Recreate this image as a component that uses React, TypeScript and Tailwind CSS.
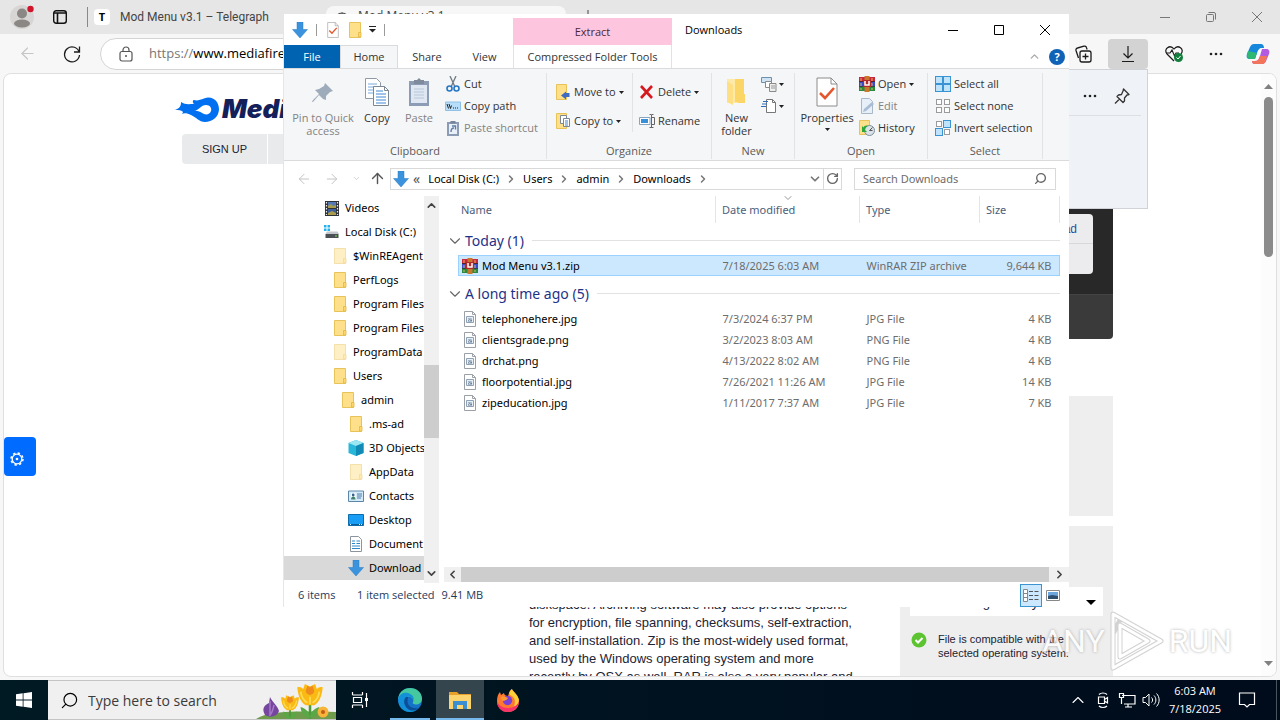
import React from 'react';
import { ChevronDown, ChevronRight, ChevronUp, ArrowLeft, ArrowRight, ArrowUp, Search, RotateCw } from 'lucide-react';

type IconProps = { className?: string };

/* ---------- shared icons ---------- */

const BlueArrow: React.FC<IconProps> = ({ className = 'w-4 h-4' }) => (
  <svg viewBox="0 0 16 16" className={className}>
    <path d="M5 0h6v7.500h4.500L8 16 .5 7.500H5z" fill="#3a93dc" stroke="#2b7cc4" strokeWidth=".5" />
  </svg>
);

const Folder: React.FC<IconProps> = ({ className = 'w-4 h-4' }) => (
  <svg viewBox="0 0 16 16" className={className}>
    <path d="M2.500.500h11v15h-11z" fill="#ffe08a" stroke="#e8c35a" />
    <path d="M11.500 10.500h2.500v4.500h-2.500z" fill="#ffd766" stroke="#e0b64a" strokeWidth=".8" />
  </svg>
);

const WinRar = () => (
  <svg viewBox="0 0 16 16" className="w-4 h-4 shrink-0">
    <path d="M0 1h16v5H0z" fill="#c8283c" />
    <path d="M0 6h16v4.500H0z" fill="#3a4ac8" />
    <path d="M0 10.500h16V15H0z" fill="#2b8a3e" />
    <path d="M0 5.500h16M0 10.500h16" stroke="#222" strokeWidth=".7" />
    <path d="M5.500 0h5v16h-5z" fill="#c9772d" />
    <path d="M4 4h8v7H4z" fill="#b02c2c" />
    <path d="M6 5v4h4V5" fill="none" stroke="#fff" strokeWidth="1.500" />
    <path d="M2 2v3M13 2v3M2 7v3M13 7v3M2 12v2M13 12v2" stroke="#f3d36b" strokeWidth=".8" />
  </svg>
);

const ImageFile = () => (
  <svg viewBox="0 0 16 16" className="w-4 h-4 shrink-0">
    <path d="M2.500.500h8l3 3v12h-11z" fill="#fff" stroke="#9aa0a6" />
    <path d="M10.500.500v3h3" fill="none" stroke="#9aa0a6" />
    <path d="M4.500 5.500h7v6h-7z" fill="#e6eef6" stroke="#8ea1b5" />
    <path d="M6 7.500h4v3H6z" fill="#6b8199" />
    <path d="M6 8.500l2 1 2-2" stroke="#fff" strokeWidth=".8" fill="none" />
  </svg>
);

const VideoIcon = () => (
  <svg viewBox="0 0 16 16" className="w-4 h-4">
    <path d="M1 1h14v15H1z" fill="#2f3338" />
    <path d="M4 2h8v6H4z" fill="#5679b5" />
    <path d="M4 9h8v6H4z" fill="#3f5f9c" />
    <path d="M4 6l3-2 2 2 3-1v3H4zM4 13l4-2 4 2v2H4z" fill="#a99d4d" />
    <path d="M2.500 2v13M13.500 2v13" stroke="#eee" strokeWidth="1.200" strokeDasharray="1.500 1.500" />
  </svg>
);

const DiskIcon = () => (
  <svg viewBox="0 0 16 16" className="w-4 h-4">
    <path d="M0 1h2.500v2.500H0zM3.500 1H6v2.500H3.500zM0 4.500h2.500V7H0zM3.500 4.500H6V7H3.500z" fill="#21b3ee" />
    <path d="M3 7.500h10.500L15 10H1.500z" fill="#c3c7cb" />
    <path d="M1.500 10h13v4h-13z" fill="#4b5055" />
    <path d="M11 12h2" stroke="#7ee04a" />
  </svg>
);

const CubeIcon = () => (
  <svg viewBox="0 0 16 16" className="w-4 h-4">
    <path d="M8 0l7.500 3v10L8 16 .5 13V3z" fill="#28b7d8" />
    <path d="M8 0l7.500 3L8 6 .5 3z" fill="#9be8f4" />
    <path d="M8 6l7.500-3v10L8 16z" fill="#118bb5" />
  </svg>
);

const ContactIcon = () => (
  <svg viewBox="0 0 16 16" className="w-4 h-4">
    <path d="M.5 3h15v10.500H.5z" fill="#d6ebfa" stroke="#5c86a8" />
    <path d="M3 5h4.500v6.500H3z" fill="#fff" />
    <circle cx="5.200" cy="7" r="1.400" fill="#37618a" />
    <path d="M3 11.500c0-4 4.500-4 4.500 0z" fill="#3f7f6b" />
    <path d="M9 6h5M9 8h5M9 10h4" stroke="#4b7ba6" />
  </svg>
);

const DesktopIcon = () => (
  <svg viewBox="0 0 16 16" className="w-4 h-4">
    <path d="M.5 2.500h15v11H.5z" fill="#1a9df5" stroke="#0f6cab" />
    <path d="M1 12.500h14" stroke="#0b5c96" />
    <path d="M2 12.500h2M11 12.500h3" stroke="#d7eefe" strokeDasharray="1 1" />
  </svg>
);

const DocIcon = () => (
  <svg viewBox="0 0 16 16" className="w-4 h-4">
    <path d="M2.500.500h8l3 3v12h-11z" fill="#fff" stroke="#8d959c" />
    <path d="M4 5h3M4 7.500h3M8.500 5H12M8.500 7.500H12M4 10h8M4 12.500h8" stroke="#2e86c9" />
  </svg>
);

const CheckDoc: React.FC<IconProps> = ({ className }) => (
  <svg viewBox="0 0 22 30" className={className}>
    <path d="M1 1h14l6 6v22H1z" fill="#fff" stroke="#8c8c8c" />
    <path d="M15 1v6h6" fill="none" stroke="#8c8c8c" />
    <path d="M4 16l5 5 9-10" fill="none" stroke="#e4572e" strokeWidth="2.600" />
  </svg>
);

const Caret = () => (
  <svg viewBox="0 0 5 3" className="w-[5px] h-[3px] shrink-0">
    <path d="M0 0h5L2.500 3z" fill="#222" />
  </svg>
);

const Dots = () => (
  <svg viewBox="0 0 14 4" className="w-3.5 h-1">
    <circle cx="2" cy="2" r="1.300" fill="#222" />
    <circle cx="7" cy="2" r="1.300" fill="#222" />
    <circle cx="12" cy="2" r="1.300" fill="#222" />
  </svg>
);

/* ---------- ribbon ---------- */

const RibbonGroup: React.FC<{ label: string; className: string; children: React.ReactNode }> = ({ label, className, children }) => (
  <div className={`flex flex-col shrink-0 border-r border-[#e2e3e4] mt-1 mb-px ${className}`}>
    <div className="flex flex-1 items-start">{children}</div>
    <div className="text-center text-[#5a5a5a] leading-4">{label}</div>
  </div>
);

const BigButton: React.FC<{ icon: React.ReactNode; className?: string; children: React.ReactNode }> = ({ icon, className = '', children }) => (
  <button className={`flex flex-col items-center leading-[13px] pt-[3px] ${className}`}>
    <span className="h-8 mb-[3px] flex items-center justify-center">{icon}</span>
    {children}
  </button>
);

const SmallButton: React.FC<{ icon: React.ReactNode; label: string; caret?: boolean; disabled?: boolean }> = ({ icon, label, caret, disabled }) => (
  <button disabled={disabled} className={`flex items-center gap-[3px] h-[22px] whitespace-nowrap ${disabled ? 'text-[#838383]' : ''}`}>
    <span className="w-4 h-4 shrink-0">{icon}</span>
    {label}
    {caret && <Caret />}
  </button>
);

const SelectIcon: React.FC<{ on: number[] }> = ({ on }) => (
  <svg viewBox="0 0 16 16" className="w-4 h-4">
    {[0, 1, 2, 3].map((i) => {
      const active = on.includes(i);
      return (
        <rect key={i} x={(i % 2) * 8 + (active ? 0.5 : 1.5)} y={Math.floor(i / 2) * 8 + (active ? 0.5 : 1.5)} width={active ? 7 : 5} height={active ? 7 : 5}
          fill={active ? '#bfe3fb' : '#fff'} stroke={active ? '#3c93d2' : '#9b9b9b'} />
      );
    })}
  </svg>
);

const Ribbon = () => (
  <div className="flex h-[93px] shrink-0 bg-[#f5f6f7] border-y border-[#dadbdc] text-[#333] overflow-hidden">
    <RibbonGroup label="Clipboard" className="w-[263px]">
      <BigButton className="w-[78px] text-[#838383]" icon={
        <svg viewBox="0 0 24 24" className="w-6 h-6"><path d="M14 3l8 8-3 1-4 4 0 4-3-1-4-4-6 7-1 0 1-2 6-6-4-4 4-1 5-3z" fill="#9eabba" /></svg>
      }>
        <span>Pin to Quick</span>
        <span>access</span>
      </BigButton>
      <BigButton className="w-[30px]" icon={
        <svg viewBox="0 0 26 30" className="w-[26px] h-[30px]">
          <path d="M1.500 1.500h11l4 4v16h-15z" fill="#fff" stroke="#8e9aa8" />
          <path d="M4 7h9M4 10h9M4 13h9M4 16h9" stroke="#79a9dc" />
          <path d="M9.500 9.500h11l4 4v15h-15z" fill="#fff" stroke="#7c8794" />
          <path d="M20.500 9.500v4h4" fill="none" stroke="#7c8794" />
          <path d="M12 14h7M12 17h10M12 20h10M12 23h10M12 26h10" stroke="#3f86d2" />
        </svg>
      }>Copy</BigButton>
      <BigButton className="w-[54px] text-[#838383]" icon={
        <svg viewBox="0 0 22 30" className="w-[22px] h-[30px]">
          <path d="M1 4h20v25H1z" fill="#8c9cb4" />
          <path d="M3 8h16v18H3z" fill="#dfe7f2" />
          <path d="M6 3h3l2-2 2 2h3v4H6z" fill="#7f8b9d" />
          <path d="M6 12h10M6 15h10M6 18h10M6 21h10" stroke="#b9c7da" />
        </svg>
      }>Paste</BigButton>
      <div className="flex flex-col -ml-px">
        <SmallButton label="Cut" icon={
          <svg viewBox="0 0 16 16"><path d="M5 0l5 11M11 0L6 11" stroke="#6d7882" strokeWidth="1.300" /><circle cx="4.500" cy="12.500" r="2.500" fill="none" stroke="#2577c4" strokeWidth="1.600" /><circle cx="11.500" cy="12.500" r="2.500" fill="none" stroke="#2577c4" strokeWidth="1.600" /></svg>
        } />
        <SmallButton label="Copy path" icon={
          <svg viewBox="0 0 16 16"><path d="M.5 4h15v8.500H.5z" fill="#b8ddf8" stroke="#8fc0e6" /><path d="M2 6l1.500 4.500M4 6l1.500 4.500 1-3" stroke="#222" fill="none" /><path d="M8 10h6" stroke="#222" strokeDasharray="1 1" /></svg>
        } />
        <SmallButton disabled label="Paste shortcut" icon={
          <svg viewBox="0 0 16 16"><path d="M2 2h12v14H2z" fill="#8c9cb4" /><path d="M4 4h8v10H4z" fill="#eaf0f8" /><path d="M5.500 1h5v2.500h-5z" fill="#76859b" /><path d="M6 12c0-3 1-4 3-4M7 6h3.500v3.500" stroke="#5c7da8" strokeWidth="1.400" fill="none" /></svg>
        } />
      </div>
    </RibbonGroup>

    <RibbonGroup label="Organize" className="w-[165px]">
      <div className="flex flex-col gap-[7px] pl-2 pt-2 w-[86px] border-r border-[#e2e3e4]">
        <SmallButton caret label="Move to" icon={
          <svg viewBox="0 0 16 16"><path d="M1.500.500h10v15h-10z" fill="#ffe08a" stroke="#e8c35a" /><path d="M14.500 9v4H11v2.500L6 11.500l5-4V9z" fill="#3d6cc0" /></svg>
        } />
        <SmallButton caret label="Copy to" icon={
          <svg viewBox="0 0 16 16"><path d="M1.500.500h10v15h-10z" fill="#ffe08a" stroke="#e8c35a" /><path d="M5.500 2.500h6v8h-6z" fill="#fff" stroke="#7c8794" /><path d="M8.500 5.500h6v8h-6z" fill="#fff" stroke="#7c8794" /><path d="M10 8h3M10 10h3M10 12h3" stroke="#3f86d2" /></svg>
        } />
      </div>
      <div className="flex flex-col gap-[7px] pl-[6px] pt-2">
        <SmallButton caret label="Delete" icon={
          <svg viewBox="0 0 16 16"><path d="M2 2l11 12M13 2L2 14" stroke="#d6191f" strokeWidth="2.600" /></svg>
        } />
        <SmallButton label="Rename" icon={
          <svg viewBox="0 0 16 16"><path d="M.5 4.500H11v7H.5z" fill="#fff" stroke="#8aa4bd" /><path d="M2 6h7v4H2z" fill="#3a8fd9" /><path d="M10.500 1.500h2l2 0M12.500 2v12M10.500 14.500h4M12.500 4.500h3v7h-3" stroke="#666" fill="none" /></svg>
        } />
      </div>
    </RibbonGroup>

    <RibbonGroup label="New" className="w-[83px]">
      <BigButton className="w-[49px]" icon={
        <svg viewBox="0 0 22 28" className="w-[22px] h-7"><path d="M1 1h14v24H1z" fill="#ffe9a6" /><path d="M9 1h9v23H9z" fill="#fbd667" /><path d="M12 16h7v9h-7z" fill="#fbd667" /><path d="M1 3l6 4v20l-6-3z" fill="#ffdf84" /></svg>
      }>
        <span>New</span>
        <span>folder</span>
      </BigButton>
      <div className="flex flex-col">
        <button aria-label="New item" className="flex items-center gap-0.5 h-[22px]">
          <svg viewBox="0 0 16 16" className="w-4 h-4"><path d="M.5 1.500h10v5H.5z" fill="#cfe3f3" stroke="#6b90ad" /><path d="M4.500 5.500h6v6h-6z" fill="#fff" stroke="#8a8a8a" /><path d="M8.500 7.500h6.500v8H8.500z" fill="#eee" stroke="#8a8a8a" /><path d="M10 10h4M10 12h4" stroke="#999" /></svg>
          <Caret />
        </button>
        <button aria-label="Easy access" className="flex items-center gap-0.5 h-[22px]">
          <svg viewBox="0 0 16 16" className="w-4 h-4"><path d="M5.500 1.500h6l3 3v10h-9z" fill="#fff" stroke="#777" /><path d="M11.500 1.500v3h3" fill="none" stroke="#777" /><path d="M2 3.500h5M1 6h5M0 8.500h5" stroke="#2d6fbf" strokeWidth="1.200" /></svg>
          <Caret />
        </button>
      </div>
    </RibbonGroup>

    <RibbonGroup label="Open" className="w-[133px]">
      <BigButton className="w-[64px]" icon={<CheckDoc className="w-[22px] h-[30px]" />}>
        <span>Properties</span>
        <span className="pt-1"><Caret /></span>
      </BigButton>
      <div className="flex flex-col">
        <SmallButton caret label="Open" icon={<WinRar />} />
        <SmallButton disabled label="Edit" icon={
          <svg viewBox="0 0 16 16"><path d="M2.500.500h8l3 3v12h-11z" fill="#e7eff8" stroke="#a9b7c6" /><path d="M4 14l1-3 8-7 2 2-8 7z" fill="#a9bdd4" /></svg>
        } />
        <SmallButton label="History" icon={
          <svg viewBox="0 0 16 16"><path d="M.5.500h10v14H.5z" fill="#ffe08a" stroke="#e8c35a" /><circle cx="10.500" cy="10.500" r="5" fill="#d9e2e8" stroke="#7e8f9a" /><path d="M10.500 10.500l3-3M10.500 10.500h3" stroke="#555" /><path d="M3 6v6h5l-2-2c0-2 1-3 3-4-2-1-4 0-4.500 1.500z" fill="#30a53a" /></svg>
        } />
      </div>
    </RibbonGroup>

    <RibbonGroup label="Select" className="w-[115px]">
      <div className="flex flex-col pl-[7px]">
        <SmallButton label="Select all" icon={<SelectIcon on={[0, 1, 2, 3]} />} />
        <SmallButton label="Select none" icon={<SelectIcon on={[]} />} />
        <SmallButton label="Invert selection" icon={<SelectIcon on={[1, 2]} />} />
      </div>
    </RibbonGroup>
  </div>
);

/* ---------- explorer ---------- */

const tree = [
  { label: 'Videos', pad: 'pl-10', icon: <VideoIcon /> },
  { label: 'Local Disk (C:)', pad: 'pl-10', icon: <DiskIcon /> },
  { label: '$WinREAgent', pad: 'pl-12', icon: <Folder className="w-4 h-4 opacity-50" /> },
  { label: 'PerfLogs', pad: 'pl-12', icon: <Folder /> },
  { label: 'Program Files', pad: 'pl-12', icon: <Folder /> },
  { label: 'Program Files', pad: 'pl-12', icon: <Folder /> },
  { label: 'ProgramData', pad: 'pl-12', icon: <Folder className="w-4 h-4 opacity-50" /> },
  { label: 'Users', pad: 'pl-12', icon: <Folder /> },
  { label: 'admin', pad: 'pl-14', icon: <Folder /> },
  { label: '.ms-ad', pad: 'pl-16', icon: <Folder /> },
  { label: '3D Objects', pad: 'pl-16', icon: <CubeIcon /> },
  { label: 'AppData', pad: 'pl-16', icon: <Folder className="w-4 h-4 opacity-50" /> },
  { label: 'Contacts', pad: 'pl-16', icon: <ContactIcon /> },
  { label: 'Desktop', pad: 'pl-16', icon: <DesktopIcon /> },
  { label: 'Document', pad: 'pl-16', icon: <DocIcon /> },
  { label: 'Download', pad: 'pl-16', icon: <BlueArrow />, active: true },
];

const groups = [
  {
    title: 'Today (1)',
    files: [{ name: 'Mod Menu v3.1.zip', date: '7/18/2025 6:03 AM', type: 'WinRAR ZIP archive', size: '9,644 KB', selected: true }],
  },
  {
    title: 'A long time ago (5)',
    files: [
      { name: 'telephonehere.jpg', date: '7/3/2024 6:37 PM', type: 'JPG File', size: '4 KB' },
      { name: 'clientsgrade.png', date: '3/2/2023 8:03 AM', type: 'PNG File', size: '4 KB' },
      { name: 'drchat.png', date: '4/13/2022 8:02 AM', type: 'PNG File', size: '4 KB' },
      { name: 'floorpotential.jpg', date: '7/26/2021 11:26 AM', type: 'JPG File', size: '14 KB' },
      { name: 'zipeducation.jpg', date: '1/11/2017 7:37 AM', type: 'JPG File', size: '7 KB' },
    ],
  },
];

const FileTable = () => (
  <table className="w-full table-fixed border-collapse">
    <colgroup>
      <col />
      <col className="w-36" />
      <col className="w-[120px]" />
      <col className="w-20" />
    </colgroup>
    <thead>
      <tr className="h-[27px] text-[#4c607a] text-left">
        <th className="font-normal pl-[3px]">Name</th>
        <th className="font-normal pl-1.5 border-l border-[#e5e5e5] relative">
          Date modified
          <ChevronDown size={12} strokeWidth={1.5} className="absolute -top-1 left-1/2 -translate-x-1/2 text-[#777]" />
        </th>
        <th className="font-normal pl-1.5 border-l border-[#e5e5e5]">Type</th>
        <th className="font-normal pl-1.5 border-x border-[#e5e5e5]">Size</th>
      </tr>
    </thead>
    {groups.map((group) => (
      <tbody key={group.title}>
        <tr className="h-8">
          <th colSpan={4} className="font-normal text-left">
            <div className="flex items-center -ml-3 pt-[3px] text-[14px] leading-5 text-[#1e3287]">
              <ChevronDown size={18} strokeWidth={1.5} className="text-[#666] mr-px" />
              {group.title}
              <span className="flex-1 h-px bg-[#e2e2e2] ml-2" />
            </div>
          </th>
        </tr>
        {group.files.map((file) => (
          <tr key={file.name} className={`h-[21px] text-[#6d6d6d] ${file.selected ? 'bg-[#cce8ff] outline outline-1 -outline-offset-1 outline-[#99d1ff]' : ''}`}>
            <td className="text-black">
              <div className="flex items-center gap-1 pl-1">
                {file.selected ? <WinRar /> : <ImageFile />}
                {file.name}
              </div>
            </td>
            <td className="pl-[7px]">{file.date}</td>
            <td className="pl-[7px]">{file.type}</td>
            <td className="pr-2 text-right">{file.size}</td>
          </tr>
        ))}
      </tbody>
    ))}
  </table>
);

const Explorer = () => (
  <section className="absolute left-[284px] right-[211px] top-3.5 bottom-[73px] bg-white flex flex-col text-[11px] leading-4 text-black shadow-[-1px_0_0_#e4e6e8] z-20">
    {/* title bar */}
    <div className="flex h-[31px] shrink-0 items-center">
      <div className="flex items-center w-[229px] pl-2">
        <BlueArrow />
        <span className="w-px h-3 bg-[#9a9a9a] ml-2" />
        <CheckDoc className="w-3 h-4 ml-2.5" />
        <span className="ml-2"><Folder /></span>
        <svg viewBox="0 0 7 7" className="w-[7px] h-[7px] ml-1.5"><path d="M0 .5h7" stroke="#222" /><path d="M0 3h7L3.500 6.500z" fill="#222" /></svg>
        <span className="w-px h-3 bg-[#9a9a9a] ml-2" />
      </div>
      <div className="w-[159px] self-end h-[27px] bg-[#fdc5de] text-[#4b2838] flex items-center justify-center">Extract</div>
      <h1 className="pl-[13px] flex-1">Downloads</h1>
      <div className="flex pr-px">
        <button aria-label="Minimize" className="w-[46px] flex justify-center items-center"><svg viewBox="0 0 10 10" className="w-2.5 h-2.5"><path d="M0 5.500h10" stroke="#000" /></svg></button>
        <button aria-label="Maximize" className="w-[46px] flex justify-center items-center"><svg viewBox="0 0 10 10" className="w-2.5 h-2.5"><path d="M.5.500h9v9h-9z" fill="none" stroke="#000" /></svg></button>
        <button aria-label="Close" className="w-[46px] flex justify-center items-center"><svg viewBox="0 0 10 10" className="w-2.5 h-2.5"><path d="M0 0l10 10M10 0L0 10" stroke="#000" /></svg></button>
      </div>
    </div>

    {/* ribbon tabs */}
    <div className="flex h-[23px] shrink-0 text-[#333]">
      <button className="w-14 bg-[#0063b1] text-white">File</button>
      <button className="w-[58px] bg-[#f5f6f7] border-x border-t border-[#dadbdc]">Home</button>
      <button className="w-[58px]">Share</button>
      <button className="w-[57px]">View</button>
      <button className="w-[159px] border-x border-[#e6dfe3]">Compressed Folder Tools</button>
      <div className="flex flex-1 items-center justify-end gap-2 pr-1">
        <ChevronUp size={13} strokeWidth={2.5} className="text-[#aaa]" />
        <button aria-label="Help" className="w-4 h-4 rounded-full bg-[#0f62b5] text-white font-bold leading-4">?</button>
      </div>
    </div>

    <Ribbon />

    {/* address row */}
    <div className="flex h-[35px] shrink-0 items-center pr-[13px] font-['Noto_Sans',sans-serif]">
      <div className="flex items-center w-[106px] pl-3 text-[#c4c4c4]">
        <ArrowLeft size={16} strokeWidth={1.5} />
        <ArrowRight size={16} strokeWidth={1.5} className="ml-3" />
        <ChevronDown size={9} className="ml-3" />
        <ArrowUp size={17} className="ml-2 text-[#555]" />
      </div>
      <div className="flex flex-1 items-center h-[22px] border border-[#d9d9d9]">
        <span className="pl-0.5"><BlueArrow className="w-4 h-4" /></span>
        <span className="pl-1 pr-2 text-[14px] text-[#555]">«</span>
        {['Local Disk (C:)', 'Users', 'admin', 'Downloads'].map((part) => (
          <span key={part} className="flex items-center">
            {part}
            <ChevronRight size={12} strokeWidth={3} className="mx-1.5 text-[#777]" />
          </span>
        ))}
        <ChevronDown size={14} strokeWidth={3} className="ml-auto mr-px text-[#777]" />
        <button aria-label="Refresh" className="w-[18px] h-full border-l border-[#d9d9d9] flex items-center justify-center"><RotateCw size={13} strokeWidth={2.5} className="text-[#666]" /></button>
      </div>
      <label className="flex items-center w-[202px] h-[22px] ml-3 border border-[#d9d9d9] px-2">
        <input aria-label="Search Downloads" placeholder="Search Downloads" className="flex-1 min-w-0 outline-none placeholder:text-[#6d6d6d]" />
        <Search size={13} strokeWidth={2.5} className="-scale-x-100 text-[#666]" />
      </label>
    </div>

    <div className="flex flex-1 min-h-0 font-['Noto_Sans',sans-serif]">
      <nav className="w-[140px] shrink-0 overflow-hidden">
        {tree.map((item, i) => (
          <a key={i} href="#" className={`flex items-center gap-[5px] h-6 whitespace-nowrap ${item.pad} ${item.active ? 'bg-[#d9d9d9]' : ''}`}>
            <span className="shrink-0">{item.icon}</span>
            {item.label}
          </a>
        ))}
      </nav>
      <div className="w-[15px] shrink-0 bg-[#f0f0f0] flex flex-col items-center py-[3px] text-[#444]">
        <ChevronUp size={13} strokeWidth={3} />
        <div className="flex-1 w-full pt-[153px]"><div className="h-[73px] bg-[#cdcdcd]" /></div>
        <ChevronDown size={13} strokeWidth={3} />
      </div>
      <div className="flex flex-1 flex-col min-w-0 pl-[5px]">
        <div className="flex-1 pl-3.5 pr-[9px]"><FileTable /></div>
        <div className="h-[15px] shrink-0 bg-[#f0f0f0] flex items-center text-[#444] mb-px">
          <ChevronRight size={13} strokeWidth={3} className="rotate-180 mx-0.5" />
          <div className="flex-1 h-full bg-[#cdcdcd]" />
          <ChevronRight size={13} strokeWidth={3} className="ml-1 mr-[3px]" />
        </div>
      </div>
    </div>

    {/* status bar */}
    <footer className="flex h-6 shrink-0 items-center pl-3.5 pr-[5px] text-[#1e395b]">
      <span className="w-[59px]">6 items</span>
      <span>1 item selected</span>
      <span className="pl-[7px]">9.41 MB</span>
      <div className="ml-auto flex items-center">
        <button aria-label="Details view" className="w-[22px] h-[23px] bg-[#cce8ff] border border-[#3c93d2] flex items-center justify-center">
          <svg viewBox="0 0 16 13" className="w-4 h-[13px]"><path d="M.5.500h4v12h-4zM.5 4.500h4M.5 8.500h4" fill="#fff" stroke="#888" /><path d="M6 2.500h4M6 6.500h4M6 10.500h4M11.500 2.500h4M11.500 6.500h4M11.500 10.500h4" stroke="#555" /></svg>
        </button>
        <button aria-label="Thumbnail view" className="w-[22px] flex justify-center">
          <svg viewBox="0 0 14 11" className="w-3.5 h-[11px]"><path d="M.5.500h13v10H.5z" fill="#fff" stroke="#888" /><path d="M2 2h10v4H2z" fill="#6ba6df" /><path d="M2 6l4-1 6 1v3H2z" fill="#2e4f6e" /></svg>
        </button>
      </div>
    </footer>
  </section>
);

/* ---------- browser ---------- */

const DownloadsPopup = () => (
  <aside className="absolute right-[132px] top-[69px] w-[360px] h-[140px] bg-[#eff2f6] border border-[#cfd2d6] z-10">
    <div className="flex items-center justify-end gap-4 h-[46px] mr-1.5 pr-2.5 pt-1.5 border-b border-[#dddfe3]">
      <Dots />
      <svg viewBox="0 0 18 18" className="w-[18px] h-[18px]"><path d="M10.500 2l5.500 5.500-2 .5-2.500 3 0 3-1.500 1.500L4 9.500 5.500 8l3-.5L10 4zM6.500 12L2 16.500" fill="none" stroke="#333" strokeWidth="1.300" strokeLinejoin="round" /></svg>
    </div>
  </aside>
);

const MediaFirePage = () => (
  <main className="flex flex-1 mx-[3px] mb-[3px] bg-white rounded-lg border border-[#dfdfdf] overflow-hidden relative font-['Liberation_Sans',sans-serif] text-[#1c2333]">
    <div className="flex flex-1 min-w-0 justify-center pl-[30px]">
      <div className="flex flex-col w-[931px]">
        <header className="h-[90px] shrink-0">
          <a href="#" className="flex items-center h-[60px] pt-2.5 -ml-2">
            <svg viewBox="0 0 46 28" className="w-[46px] h-7">
              <path d="M1 15c5-2 6-4 6-8 4 3 8 2 13 2-2-2-1-4 0-4 3 1 6 0 10-1.500C38 0 45 6 45 14S38 27 31 27c-6 0-9-5-14-7-4-2-7-2-9-1 2-2 1-4-7-4z" fill="#0070f0" />
              <path d="M20 16c5-1 7-6 12-6 4 0 6 3 5 6s-4 4-7 3-5-4-10-3z" fill="#fff" />
            </svg>
            <span className="pl-0.5 text-[26px] leading-7 font-['Inter'] font-black italic text-[#13205a]">MediaFire</span>
          </a>
          <div className="flex gap-px text-[11px]">
            <button className="w-[85px] h-[30px] bg-[#e8eaec] rounded-l-sm">SIGN UP</button>
            <button className="w-[85px] h-[30px] bg-[#e8eaec]">LOG IN</button>
          </div>
        </header>
        <div className="flex flex-1 min-h-0 justify-end gap-10">
          <p className="w-[331px] pt-[432px] text-[13px] leading-[18px] whitespace-nowrap">
            diskspace. Archiving software may also provide options<br />
            for encryption, file spanning, checksums, self-extraction,<br />
            and self-installation. Zip is the most-widely used format,<br />
            used by the Windows operating system and more<br />
            recently by OSX as well. RAR is also a very popular and
          </p>
          <div className="w-[213px] flex flex-col">
            <div className="h-[130px] shrink-0 bg-[#282828] px-5 pt-[50px]">
              <div className="h-[60px] bg-[#ececee] rounded">
                <button className="block w-full h-[30px] pr-4 border-b border-[#d8d8dc] text-right text-[12px] text-[#1f4fa3]">Download</button>
              </div>
            </div>
            <div className="h-[45px] shrink-0 bg-[#3a3a3a] border-t border-[#444] rounded-b" />
            <div className="h-[120px] shrink-0 mt-[57px] bg-[#eee]" />
            <div className="flex-1 mt-2.5 bg-[#eee] px-2.5 pt-[61px]">
              <label className="flex relative bg-white">
                <select aria-label="Operating system" className="appearance-none w-full h-[29px] px-2.5 pt-0.5 text-[13px]">
                  <option>View settings history</option>
                </select>
                <svg viewBox="0 0 10 5" className="absolute right-[7px] top-[13px] w-2.5 h-[5px]"><path d="M0 0h10L5 5z" fill="#000" /></svg>
              </label>
              <div className="flex gap-[11px] pt-4 pl-px text-[11px] leading-[14px] whitespace-nowrap">
                <svg viewBox="0 0 16 16" className="w-4 h-4"><circle cx="8" cy="8" r="7.500" fill="#5cc431" /><path d="M4.500 8l2.500 2.500L11.500 6" stroke="#fff" strokeWidth="2" fill="none" /></svg>
                <span>File is compatible with the<br />selected operating system.</span>
              </div>
            </div>
          </div>
        </div>
      </div>
    </div>
    <div className="w-[15px] shrink-0 bg-[#fcfcfc] flex flex-col items-center pt-2.5 pb-2.5">
      <svg viewBox="0 0 9 5" className="w-[9px] h-[5px]"><path d="M0 5h9L4.500 0z" fill="#808080" /></svg>
      <div className="flex-1 pt-2"><div className="w-[9px] h-[160px] rounded-full bg-[#8b8b8b]" /></div>
      <svg viewBox="0 0 9 5" className="w-[9px] h-[5px]"><path d="M0 0h9L4.500 5z" fill="#808080" /></svg>
    </div>
    <button aria-label="Settings" className="absolute left-0 bottom-[200px] w-8 h-[39px] bg-[#006bff] rounded flex items-center pl-[5px] pt-1">
      <svg viewBox="0 0 16 16" className="w-4 h-4"><circle cx="8" cy="8" r="6" fill="none" stroke="#fff" strokeWidth="1.500" strokeDasharray="2.400 2.300" /><circle cx="8" cy="8" r="4.800" fill="none" stroke="#fff" strokeWidth="1.300" /><circle cx="8" cy="8" r="1.300" fill="#fff" /></svg>
    </button>
  </main>
);

const Browser = () => (
  <div className="relative flex flex-1 flex-col min-h-0 bg-[#f7f7f7] overflow-hidden">
    {/* tab strip */}
    <div className="flex h-[34px] shrink-0 items-center bg-[#e6e6e6] text-[12px] text-[#444]">
      <svg viewBox="0 0 24 24" className="w-6 h-6 ml-2.5">
        <circle cx="12" cy="12" r="12" fill="#d8d6d4" /><circle cx="12" cy="8.500" r="5" fill="#8b8784" /><ellipse cx="12" cy="18.500" rx="8" ry="4" fill="#8b8784" /><circle cx="20.500" cy="4" r="3.200" fill="#d0142c" />
      </svg>
      <svg viewBox="0 0 14 14" className="w-3.5 h-3.5 ml-[19px]"><rect x=".7" y=".7" width="12.600" height="12.600" rx="2.500" fill="none" stroke="#111" strokeWidth="1.400" /><path d="M1 3h12M4.500 3v10" stroke="#111" strokeWidth="1.600" /></svg>
      <span className="w-px h-5 bg-[#888] ml-5" />
      <span className="w-4 h-4 ml-1.5 rounded-sm bg-white text-black font-bold text-[11px] leading-4 text-center">T</span>
      <span className="ml-2.5 w-[206px] font-['Roboto','Open_Sans',sans-serif]">Mod Menu v3.1 – Telegraph</span>
      <div className="flex items-center self-end w-[240px] h-7 rounded-t-lg bg-[#f7f7f7] px-2">
        <svg viewBox="0 0 16 16" className="w-4 h-4"><circle cx="8" cy="8" r="7" fill="none" stroke="#555" strokeWidth="1.200" /><ellipse cx="8" cy="8" rx="3" ry="7" fill="none" stroke="#555" /><path d="M2 5h12M2 11h12" stroke="#555" /></svg>
        <span className="pl-2 pb-2">Mod Menu v3.1</span>
      </div>
      <svg viewBox="0 0 14 14" className="w-3.5 h-3.5 ml-[15px]"><path d="M7 0v14M0 7h14" stroke="#444" /></svg>
      <div className="ml-auto flex">
        <button aria-label="Minimize" className="w-[46px] flex justify-center"><svg viewBox="0 0 12 12" className="w-3 h-3"><path d="M1 6.500h10" stroke="#777" /></svg></button>
        <button aria-label="Restore" className="w-[46px] flex justify-center"><svg viewBox="0 0 12 12" className="w-3 h-3"><rect x="1.500" y="3.500" width="7" height="7" rx="1" fill="none" stroke="#777" /><path d="M3.500 1.500h5.500a1.500 1.500 0 0 1 1.500 1.500v5.500" fill="none" stroke="#777" /></svg></button>
        <button aria-label="Close" className="w-[46px] flex justify-center"><svg viewBox="0 0 12 12" className="w-3 h-3"><path d="M1 1l10 10M11 1L1 11" stroke="#777" /></svg></button>
      </div>
    </div>

    {/* toolbar */}
    <div className="flex h-[39px] shrink-0 items-center text-[#1b1b1b]">
      <button aria-label="Back" className="ml-[18px] text-[#c6c6c6]"><ArrowLeft size={19} strokeWidth={1.5} /></button>
      <svg viewBox="0 0 18 18" className="w-[18px] h-[18px] ml-[26px]"><path d="M16.300 7.500A7.500 7.500 0 1 0 16.500 10M16.500 1.500v5.500H11" fill="none" stroke="#1b1b1b" strokeWidth="1.300" /></svg>
      <div className="flex flex-1 items-center h-8 ml-[19px] mr-[240px] rounded-full border border-[#d4d4d4] bg-white pl-[18px]">
        <svg viewBox="0 0 14 16" className="w-3.5 h-4"><rect x="1" y="5.500" width="12" height="9.500" rx="2" fill="none" stroke="#555" strokeWidth="1.200" /><path d="M4 5.500V4a3 3 0 0 1 6 0v1.500" fill="none" stroke="#555" strokeWidth="1.200" /><circle cx="7" cy="10" r="1" fill="#555" /></svg>
        <span className="pl-4 text-[13px] text-[#777]">https://<span className="text-black">www.mediafire.com</span></span>
      </div>
      <div className="flex items-center absolute right-2.5">
        <svg viewBox="0 0 18 18" className="w-[18px] h-[18px]"><rect x="5" y="6" width="11" height="11" rx="2" fill="none" stroke="#1b1b1b" strokeWidth="1.300" /><path d="M10.500 8.500v6M7.500 11.500h6M3.500 13L1 5.500a2 2 0 0 1 1.500-2.500L9 1.200a2 2 0 0 1 2.500 1.500l.6 1.800" fill="none" stroke="#1b1b1b" strokeWidth="1.300" /></svg>
        <button aria-label="Downloads" className="w-10 h-[30px] ml-[15px] rounded bg-[#d3d3d3] flex items-center justify-center">
          <svg viewBox="0 0 16 18" className="w-4 h-[18px]"><path d="M8 1v12M3.500 8.500L8 13l4.500-4.500M2 16.500h12" fill="none" stroke="#1b1b1b" strokeWidth="1.200" /></svg>
        </button>
        <svg viewBox="0 0 20 18" className="w-5 h-[18px] ml-4"><path d="M10 16L3 9C-1 4 6-1 10 4c4-5 11 0 7 5" fill="none" stroke="#1b1b1b" strokeWidth="1.200" /><path d="M2 8h4l2-3 2.500 6L12 8h3" fill="none" stroke="#1b1b1b" strokeWidth="1.100" /><circle cx="14.500" cy="12.500" r="4.500" fill="#10803c" /><path d="M12.500 12.500l1.500 1.500 2.500-3" stroke="#fff" fill="none" /></svg>
        <span className="ml-[25px] flex"><Dots /></span>
        <svg viewBox="0 0 24 22" className="w-6 h-[22px] ml-[23px]">
          <path d="M8 1h7c2 0 3 2 3 4l-2 0c-3 0-4 2-5 5l-2 6H4c-3 0-4-2-3-5L4 4c1-2 2-3 4-3z" fill="#1688dc" />
          <path d="M2 8l-1 4c0 3 1 4 3 4h5l2-6z" fill="#2cb873" />
          <path d="M16 21H9c-2 0-3-1-3-3l3 0c3 0 4-2 5-5l2-7h4c3 0 4 2 3 5l-3 7c-1 2-2 3-4 3z" fill="#b35be0" />
          <path d="M16 21H9c-2 0-3-1-3-3l3 0c3 0 4-2 5-5l7 0-1 5c-1 2-2 3-4 3z" fill="#f2745b" />
          <path d="M11.500 10c1-3 2-4.500 4-4.500l-2.500 7c-1 3-2 4-3.500 4z" fill="#fff" />
        </svg>
      </div>
    </div>

    <MediaFirePage />
    <DownloadsPopup />
    <Explorer />

    {/* recorder watermark */}
    <div className="absolute right-12 bottom-2 z-30 flex items-center gap-1 opacity-80 text-white text-[32px] leading-[60px] font-['Roboto'] [text-shadow:0_0_3px_#999]">
      <span>ANY</span>
      <svg viewBox="0 0 56 62" className="w-14 h-[62px]">
        <path d="M4 4l48 27L4 58zM11 15v32l28-16zM12 8L4 24" fill="none" stroke="#c8c8c8" strokeWidth="5" strokeLinejoin="round" />
        <path d="M4 4l48 27L4 58zM11 15v32l28-16z" fill="none" stroke="#fff" strokeWidth="3" strokeLinejoin="round" />
      </svg>
      <span>RUN</span>
    </div>
  </div>
);

/* ---------- taskbar ---------- */

const Tulip: React.FC<{ x: number; y: number; s: number }> = ({ x, y, s }) => (
  <g transform={`translate(${x} ${y}) scale(${s})`}>
    <path d="M0 10v18" stroke="#4d9a3d" strokeWidth="3" />
    <path d="M0 27c-9-2-11-9-11-13 7 2 11 7 11 13zM0 27c9-2 11-9 11-13-7 2-11 7-11 13z" fill="#5aa845" />
    <path d="M-15-9c3-1 5 0 7 2l2-6 6 3 6-3 2 6c2-2 4-3 7-2-1 10-4 18-10 21h-10c-6-3-9-11-10-21z" fill="#fbb914" />
    <path d="M-5-5l2-6 3 2 3-2 2 6c0 3-2 4-5 5-3-1-5-2-5-5z" fill="#ef8a1d" />
    <path d="M-11-4c1 7 4 11 8 13M11-4C10 3 7 7 3 9M0 2v9" stroke="#ffdc55" strokeWidth="2" fill="none" />
  </g>
);

const Taskbar = () => (
  <footer className="flex h-10 shrink-0 items-center bg-gradient-to-r from-[#001a23] to-[#000b1c] text-white">
    <button aria-label="Start" className="w-12 h-full flex items-center justify-center">
      <svg viewBox="0 0 16 16" className="w-4 h-4"><path d="M0 2.200L6.700 1.300v6.300H0zM7.500 1.200L16 0v7.600H7.500zM0 8.400h6.700v6.300L0 13.800zM7.500 8.400H16V16l-8.500-1.200z" fill="#fff" /></svg>
    </button>
    <label className="flex items-center w-72 h-full bg-[#f0f0f0] border-y border-[#c4c4c4] pl-3">
      <Search size={19} strokeWidth={1.5} className="-scale-x-100 text-black shrink-0" />
      <input aria-label="Search" placeholder="Type here to search" className="flex-1 min-w-0 pl-[9px] text-[14px] outline-none placeholder:text-[#3b3b3b]" />
      <svg viewBox="0 0 80 38" className="w-20 h-[38px] shrink-0">
        <path d="M0 38c12-8 38-8 80-7v7z" fill="#6f9c4c" />
        <path d="M9 34c-4-7 0-10 4-12l1-6c2 5 8 9 9 14-2 6-9 7-14 4z" fill="#7545a0" />
        <path d="M14 20v15M18 24c-1 5-2 8-4 10" stroke="#a478c6" strokeWidth="1.500" fill="none" />
        <Tulip x={34} y={22} s={0.6} />
        <Tulip x={54} y={14} s={0.85} />
        <circle cx="67" cy="31" r="5.500" fill="#f8b33a" />
        <circle cx="67" cy="31" r="2" fill="#c05b18" />
      </svg>
    </label>
    <button aria-label="Task view" className="w-12 flex justify-center">
      <svg viewBox="0 0 18 18" className="w-[18px] h-[18px]"><path d="M1.500 1v3M1.500 17v-3M11.500 1v3M11.500 17v-3M1.500 4h10M1.500 14h10M2.500 6.500h8v5h-8zM15.500 2v14" fill="none" stroke="#fff" strokeWidth="1.200" /><path d="M14 7h3v3h-3z" fill="#fff" /></svg>
    </button>
    <button aria-label="Microsoft Edge" className="relative w-[52px] h-full flex items-center justify-center">
      <svg viewBox="0 0 24 24" className="w-6 h-6">
        <circle cx="12" cy="12" r="12" fill="#1473c8" />
        <path d="M.3 10C1.500 3 7 0 12 0c7 0 12 5 12 10.500 0 4-3 6-6 6-2.500 0-4-1-3-2.500 1-1 .5-5-4-5.500C6 8 1 12 .3 10z" fill="#45c8a0" />
        <path d="M.3 10C2 5 7 4 10 5c5 1.500 6 5 6 7-1-3-4-4-6-3.500-4 1-5 6-2 10s8 4 12 1.500C17 24 13 24 12 24 5 24-.5 18 .3 10z" fill="#1391d8" />
        <path d="M8 9c-3 3-2 9 2 12s9 1 11-1c-4 1-9 0-11-4-1-3 0-5 0-7z" fill="#0c4f98" />
      </svg>
      <span className="absolute bottom-0 inset-x-1.5 h-0.5 bg-[#76b9ed]" />
    </button>
    <button aria-label="File Explorer" className="relative w-12 h-full flex items-center justify-center bg-[#34454d]">
      <svg viewBox="0 0 24 20" className="w-6 h-5"><path d="M1 2h8l2 2h12v4H1z" fill="#e7a12a" /><path d="M1 5h22v14H1z" fill="#fcd46f" /><path d="M5 19v-8h14v8h-4v-4H9v4z" fill="#3b8fd0" /></svg>
      <span className="absolute bottom-0 inset-x-0 h-0.5 bg-[#76b9ed]" />
    </button>
    <button aria-label="Firefox" className="w-12 flex justify-center">
      <svg viewBox="0 0 24 24" className="w-6 h-6">
        <path d="M12 24C5 24 1 19 1 13c0-4 1-7 3-9l1 3 3-2c0 2 2 3 4 3 1-3 2-6 4-7 0 2 6 5 7 12 0 7-5 11-11 11z" fill="#ff7a2f" />
        <path d="M12 24C5 24 1 19 1 13c1 4 5 7 11 7s9-3 11-6c-1 7-6 10-11 10z" fill="#f6336c" />
        <path d="M14 3c2-2 2-2 2-2 0 2 6 5 7 11-1 4-3 6-5 6 2-4 1-9-4-11-1-1-1-3 0-4z" fill="#ffcf3a" />
        <circle cx="11.500" cy="12.500" r="4.700" fill="#7a42d4" />
        <path d="M5 9c3-1 5 0 7 1-1 2-3 2-4 3-2 0-3-2-3-4z" fill="#ff9a2c" />
      </svg>
    </button>
    <div className="ml-auto flex items-center">
      <ChevronUp size={20} strokeWidth={1.3} />
      <svg viewBox="0 0 16 18" className="w-4 h-[18px] ml-[7px]"><path d="M3.500 6h6v6.500h-6zM9.500 8.500l3-2v5.500l-3-2M4 3.500c2-2 6-2 8 0M4 15c2 2 6 2 8 0" fill="none" stroke="#fff" strokeWidth="1.200" /></svg>
      <svg viewBox="0 0 18 16" className="w-[18px] h-4 ml-[7px]"><path d="M4 3.500h13v8.500H6M10 12v3M7 15h7M1.500 1.500h4v4h-4zM3.500 5.500V12" fill="none" stroke="#fff" strokeWidth="1.200" /></svg>
      <svg viewBox="0 0 18 16" className="w-[18px] h-4 ml-1.5"><path d="M1 5.500h2.500L7 2v12l-3.500-3.500H1zM9.500 5.500c1.500 1.500 1.500 3.500 0 5M12 3.500c2.500 2.500 2.500 6.500 0 9M14.500 1.500c3.500 3.500 3.500 9.500 0 13" fill="none" stroke="#fff" /></svg>
      <div className="w-[70px] text-center text-[11px] leading-[18px]">
        <div>6:03 AM</div>
        <div>7/18/2025</div>
      </div>
      <button aria-label="Notifications" className="w-[34px] flex justify-center mr-3">
        <svg viewBox="0 0 18 18" className="w-[18px] h-[18px]"><path d="M1.500 2h15v11.500h-5L9 16l-2.500-2.500h-5z" fill="none" stroke="#fff" strokeWidth="1.200" /></svg>
      </button>
      <span className="w-px h-10 bg-[#4a545c] mr-[3px]" />
    </div>
  </footer>
);

export default function App() {
  return (
    <div className="h-screen flex flex-col overflow-hidden font-['Open_Sans','Noto_Sans',sans-serif]">
      <Browser />
      <Taskbar />
    </div>
  );
}
